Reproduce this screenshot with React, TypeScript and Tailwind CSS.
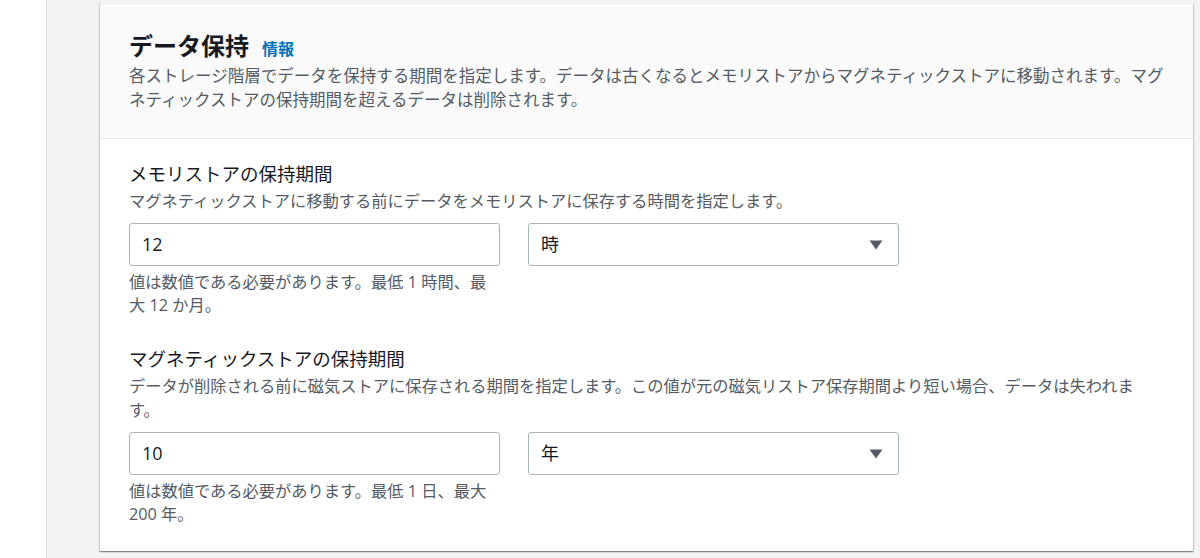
import React from 'react';

const font = 'font-["Open_Sans","Noto_Sans_CJK_JP",sans-serif]';

const Caret: React.FC = () => (
  <svg width="14" height="10" viewBox="0 0 14 10" className="shrink-0">
    <path d="M0.5 0.5 H13.5 L7 9.5 Z" fill="#545b64" />
  </svg>
);

const RetentionField: React.FC<{
  label: string;
  description: string;
  value: string;
  unit: string;
  hint: string;
  top?: string;
}> = ({ label, description, value, unit, hint, top = '' }) => (
  <div className={top}>
    <div className="text-[18.5px] leading-[26px] text-[#16191f]">{label}</div>
    <p className="mt-[2px] text-[16.25px] leading-[24px] text-[#545b64]">{description}</p>
    <div className="mt-[10px] flex gap-[28px]">
      <div className="flex h-[43px] w-[371px] items-center rounded-[3px] border border-[#aab7b8] bg-white px-[12px] text-[18px] text-[#16191f]">
        {value}
      </div>
      <div className="flex h-[43px] w-[371px] items-center justify-between rounded-[3px] border border-[#aab7b8] bg-white pl-[12px] pr-[15px] text-[18px] text-[#16191f]">
        <span>{unit}</span>
        <Caret />
      </div>
    </div>
    <p className="mt-[5px] w-[371px] text-[16.25px] leading-[23px] text-[#545b64]">{hint}</p>
  </div>
);

export default function App() {
  return (
    <div className={`flex h-[558px] w-[1200px] overflow-hidden bg-white ${font}`}>
      <div className="w-[46px] shrink-0" />
      <div className="flex-1 border-l border-[#dddddd] bg-[#f2f3f3] pl-[53px] pr-[7px] pt-[3px]">
        <div className="border-t border-[#eaeded] bg-white shadow-[0_1px_1px_0_rgba(0,28,36,0.3),1px_1px_1px_0_rgba(0,28,36,0.15),-1px_1px_1px_0_rgba(0,28,36,0.15)]">
          <div className="border-b border-[#eaeded] bg-[#fafafa] px-[29px] pb-[26px] pt-[26px]">
            <div className="flex items-baseline gap-[13px]">
              <h2 className="text-[24px] font-bold leading-[32px] text-[#16191f]">データ保持</h2>
              <a className="text-[16px] font-bold text-[#0073bb]">情報</a>
            </div>
            <p className="mt-[2px] text-[16.5px] leading-[24px] text-[#545b64]">
              各ストレージ階層でデータを保持する期間を指定します。データは古くなるとメモリストアからマグネティックストアに移動されます。マグネティックストアの保持期間を超えるデータは削除されます。
            </p>
          </div>
          <div className="px-[29px] pb-[25px] pt-[22px]">
            <RetentionField
              label="メモリストアの保持期間"
              description="マグネティックストアに移動する前にデータをメモリストアに保存する時間を指定します。"
              value="12"
              unit="時"
              hint="値は数値である必要があります。最低 1 時間、最大 12 か月。"
            />
            <RetentionField
              top="mt-[29px]"
              label="マグネティックストアの保持期間"
              description="データが削除される前に磁気ストアに保存される期間を指定します。この値が元の磁気リストア保存期間より短い場合、データは失われます。"
              value="10"
              unit="年"
              hint="値は数値である必要があります。最低 1 日、最大 200 年。"
            />
          </div>
        </div>
      </div>
    </div>
  );
}
